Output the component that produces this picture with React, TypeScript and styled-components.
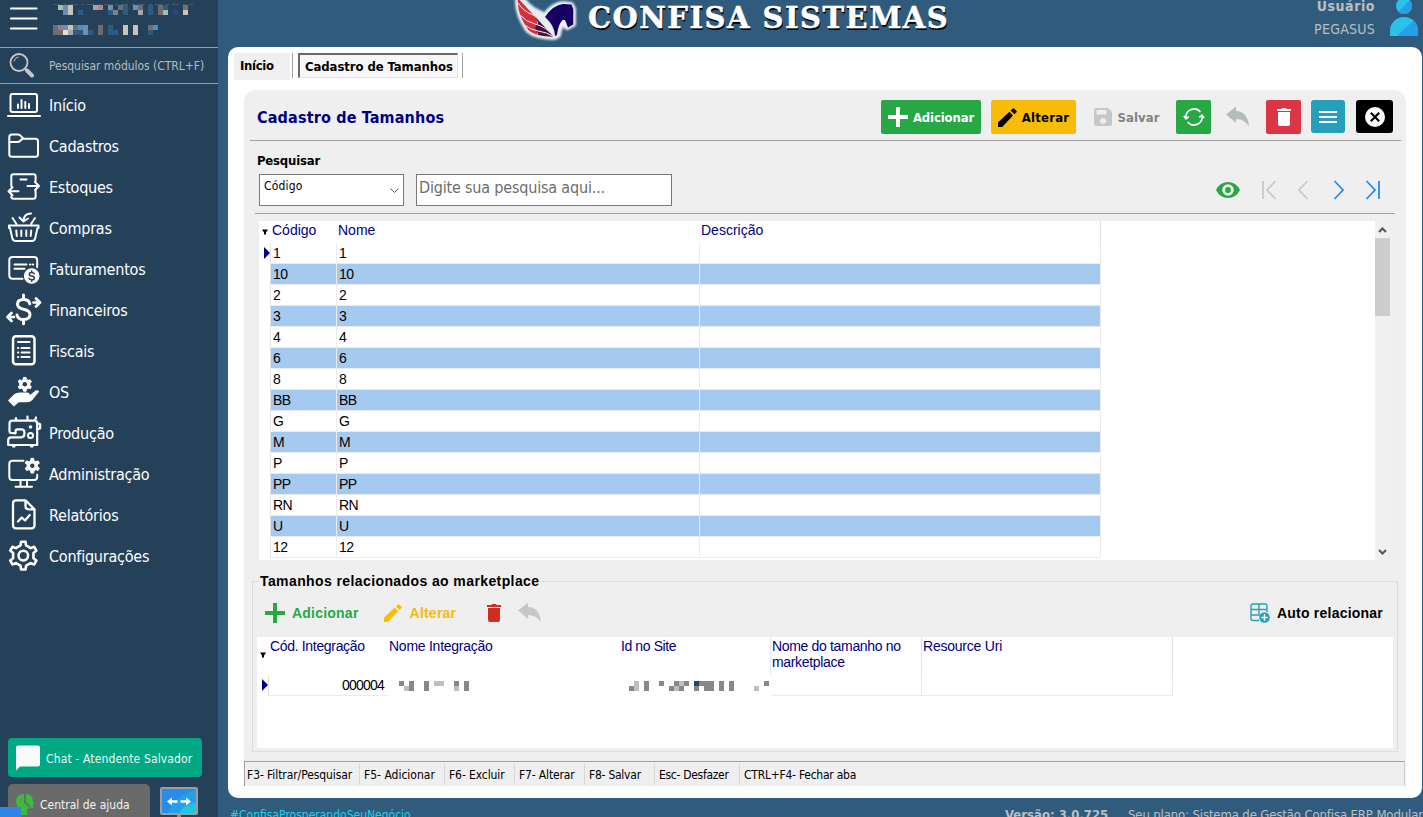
import React from 'react';
import styled, { createGlobalStyle, css } from 'styled-components';

const UI = '"DejaVu Sans Condensed", "Noto Sans", sans-serif';
const GRID = '"Liberation Sans", Arial, sans-serif';

const Global = createGlobalStyle`
  * { box-sizing: border-box; }
  html, body, #root { height: 100%; }
  body { margin: 0; overflow: hidden; background: #305b7d; font-family: ${UI}; color: #000; }
  button, input { font: inherit; }
  svg { display: block; flex: none; }
`;

const Window = styled.div`
  display: grid;
  grid-template-columns: 218px 1fr;
  width: 1423px;
  height: 817px;
  overflow: hidden;
  white-space: nowrap;
`;

/* ---------- sidebar ---------- */

const Sidebar = styled.aside`
  display: flex;
  flex-direction: column;
  background: #25415a;
  height: 817px;
  overflow: hidden;
`;

const SideTop = styled.div`
  display: flex;
  height: 48px;
  flex: none;
  padding-left: 9px;
  border-bottom: 1px solid #9c9c9c;
`;

const SearchBox = styled.div`
  display: flex;
  align-items: center;
  height: 36px;
  flex: none;
  padding-left: 9px;
  gap: 12px;
  border-bottom: 1px solid #9c9c9c;
  color: #b9bcbd;
  font-size: 12px;
  letter-spacing: -0.03px;
`;

const Menu = styled.nav`
  display: flex;
  flex-direction: column;
  flex: 1;
`;

const MenuItem = styled.a`
  display: flex;
  align-items: center;
  gap: 7px;
  height: 41px;
  padding-left: 6px;
  color: #fff;
  font-size: 16px;
  letter-spacing: -0.22px;
`;

const MenuText = styled.span`
  padding-top: 2px;
`;

const ChatButton = styled.button`
  display: flex;
  align-items: center;
  gap: 6px;
  width: 194px;
  height: 39px;
  margin: 0 0 7px 8px;
  padding: 0 0 0 8px;
  flex: none;
  border: 0;
  border-radius: 4px;
  background: #00a884;
  color: #eefaf6;
  font-size: 12px;
  letter-spacing: 0.14px;
`;

const SideBottom = styled.div`
  display: flex;
  position: relative;
  gap: 9px;
  height: 33px;
  flex: none;
  padding-left: 8px;
`;

const HelpButton = styled.div`
  display: flex;
  align-items: center;
  gap: 5px;
  width: 142px;
  height: 40px;
  padding-left: 8px;
  border-radius: 5px 5px 0 0;
  background: #6a6a6a;
  color: #f3f3f3;
  font-size: 12px;
`;

const Loading = styled.div`
  position: absolute;
  left: 0;
  bottom: 0;
  width: 21px;
  height: 10px;
  background: #2d86e8;
`;

/* ---------- main frame ---------- */

const Main = styled.main`
  display: flex;
  flex-direction: column;
  min-width: 0;
`;

const Header = styled.header`
  display: flex;
  height: 47px;
  flex: none;
  overflow: hidden;
`;

const Brand = styled.div`
  display: flex;
  gap: 7px;
  width: 800px;
  padding-left: 291px;
`;

const BrandName = styled.h1`
  margin: -1px 0 0;
  font: bold 29px/38px "DejaVu Serif", serif;
  letter-spacing: 1.5px;
  color: #fff;
  -webkit-text-stroke: 0.5px #fff;
  text-shadow: 1px 2px 0 #000, 0 1px 0 #000;
`;

const User = styled.div`
  display: flex;
  flex: 1;
  justify-content: flex-end;
  gap: 15px;
  padding-right: 5px;
`;

const UserText = styled.div`
  display: flex;
  flex-direction: column;
  align-items: flex-end;
  margin-top: -5px;
  color: #b9c0c4;
  font-size: 14px;
  line-height: 23px;
  letter-spacing: 0.25px;
`;

const UserLabel = styled.strong`
  letter-spacing: 0.55px;
`;

const Card = styled.section`
  display: flex;
  flex-direction: column;
  width: 1194px;
  height: 751px;
  flex: none;
  margin-left: 10px;
  padding: 6px 16px 12px;
  border-radius: 10px;
  background: #fefefe;
`;

const Tabs = styled.div`
  display: flex;
  height: 37px;
  flex: none;
  margin-left: -10px;
  font-size: 13px;
  font-weight: bold;
`;

const Tab = styled.div<{ $active?: boolean }>`
  display: flex;
  align-items: center;
  ${(p) =>
    p.$active
      ? css`
          width: 160px;
          height: 25px;
          margin-left: 5px;
          padding: 1px 0 0 5px;
          border: 1px solid #e3e3e3;
          border-top: 2px solid #696969;
          border-left: 2px solid #696969;
          background: #f7f7f7;
          letter-spacing: -0.08px;
        `
      : css`
          width: 56px;
          height: 27px;
          padding: 0 0 2px 6px;
          letter-spacing: -0.33px;
          background: #f0f0f0;
        `}
`;

const TabLine = styled.i<{ $gap: number }>`
  width: 1px;
  height: 25px;
  margin-left: ${(p) => p.$gap}px;
  background: #a0a0a0;
`;

const Panel = styled.div`
  display: flex;
  flex-direction: column;
  flex: 1;
  border-radius: 12px 12px 0 0;
  background: #efefef;
`;

const PanelHead = styled.div`
  display: flex;
  align-items: flex-start;
  height: 51px;
  flex: none;
  margin: 0 5px 0 6px;
  padding: 10px 8px 0 7px;
  border-bottom: 1px solid #a0a0a0;
`;

const Title = styled.h2`
  flex: 1;
  margin: 0;
  color: #000080;
  font-size: 16px;
  line-height: 35px;
  letter-spacing: 0.16px;
`;

type BtnProps = { $w: number; $bg?: string; $fg?: string; $ml?: number; $h?: number; $r?: number; $ls?: number };

const ToolButton = styled.button<BtnProps>`
  display: flex;
  align-items: center;
  justify-content: center;
  gap: 5px;
  width: ${(p) => p.$w}px;
  height: ${(p) => p.$h ?? 34}px;
  margin: 0 0 0 ${(p) => p.$ml ?? 10}px;
  padding: 0;
  border: 0;
  border-radius: ${(p) => p.$r ?? 2}px;
  background: ${(p) => p.$bg ?? 'transparent'};
  color: ${(p) => p.$fg ?? '#fff'};
  font-size: 13px;
  font-weight: bold;
  letter-spacing: ${(p) => p.$ls ?? -0.15}px;
`;

const SearchArea = styled.div`
  display: flex;
  flex-direction: column;
  height: 73px;
  flex: none;
  margin: 0 11px;
  border-bottom: 1px solid #a0a0a0;
`;

const FieldLabel = styled.label`
  padding: 11px 0 0 2px;
  font-size: 13px;
  line-height: 17px;
  font-weight: bold;
  letter-spacing: -0.2px;
`;

const Fields = styled.div`
  display: flex;
  align-items: center;
  gap: 12px;
  margin-top: 5px;
  padding: 0 14px 0 4px;
`;

const Select = styled.div`
  display: flex;
  justify-content: space-between;
  width: 145px;
  height: 32px;
  padding: 3px 4px 0 4px;
  border: 1px solid #7a7a7a;
  background: #fff;
  font-size: 12px;
  line-height: 17px;
  letter-spacing: 0.2px;
`;

const Query = styled.div`
  width: 256px;
  height: 32px;
  padding-left: 2px;
  border: 1px solid #7a7a7a;
  background: #fff;
  color: #6d6d6d;
  font-size: 16px;
  line-height: 25px;
  letter-spacing: -0.18px;
`;

const Pager = styled.div`
  display: flex;
  align-items: center;
  margin-left: auto;
`;

/* ---------- main grid ---------- */

const GridBox = styled.div`
  display: flex;
  height: 339px;
  flex: none;
  margin: 7px 16px 0 15px;
  background: #fff;
`;

const GridArea = styled.div`
  flex: 1;
  font: 14px/20px ${GRID};
`;

const SizeRow = styled.div<{ $blue?: boolean; $head?: boolean }>`
  display: grid;
  grid-template-columns: 12px 66px 363px 401px;
  width: 842px;
  height: ${(p) => (p.$head ? 22 : 21)}px;
  color: ${(p) => (p.$head ? '#000080' : '#000')};
  --cell: ${(p) => (p.$blue ? '#a6c9ef' : '#fff')};
`;

const Cell = styled.div`
  padding: 0 0 0 2px;
  border-right: 1px solid #ebebeb;
  border-bottom: 1px solid #ebebeb;
  background: var(--cell);
  letter-spacing: -0.5px;
`;

const HeadCell = styled.div<{ $line?: boolean }>`
  padding-left: 1px;
  border-right: ${(p) => (p.$line ? '1px solid #e3e3e3' : 0)};
  line-height: 19px;
`;

const Marker = styled.div<{ $line?: boolean; $inset?: number; $drop?: number }>`
  display: flex;
  align-items: center;
  justify-content: flex-end;
  padding-right: ${(p) => p.$inset ?? 0}px;
  padding-bottom: ${(p) => p.$drop ?? 0}px;
  border-right: ${(p) => (p.$line ? '1px solid #e3e3e3' : 0)};
`;

const Scroll = styled.div`
  display: flex;
  flex-direction: column;
  align-items: center;
  width: 15px;
  background: #f0f0f0;
`;

const ArrowBox = styled.div`
  display: grid;
  place-items: center;
  height: 17px;
`;

const Thumb = styled.div`
  width: 15px;
  height: 78px;
  margin-bottom: auto;
  background: #cdcdcd;
`;

/* ---------- marketplace group ---------- */

const Group = styled.fieldset`
  min-width: 0;
  width: 1146px;
  height: 179px;
  flex: none;
  margin: 13px 0 0 8px;
  padding: 0 4px 3px 4px;
  border: 1px solid #dcdcdc;
  font-family: ${GRID};
`;

const Legend = styled.legend`
  margin-left: 2px;
  padding: 0 1px;
  font: bold 14px/16px ${GRID};
  letter-spacing: 0.4px;
`;

const GroupTools = styled.div`
  display: flex;
  align-items: center;
  height: 48px;
  padding: 0 10px 0 8px;
  font: bold 14px/20px ${GRID};
`;

const LinkButton = styled.div<{ $c: string; $ml?: number; $gap?: number }>`
  display: flex;
  align-items: center;
  gap: ${(p) => p.$gap ?? 7}px;
  margin-left: ${(p) => p.$ml ?? 0}px;
  color: ${(p) => p.$c};
  letter-spacing: 0.22px;
`;

const Spacer = styled.div`
  flex: 1;
`;

const LinkGrid = styled.div`
  height: 111px;
  background: #fff;
  font-size: 14px;
`;

const LinkRow = styled.div<{ $head?: boolean }>`
  display: grid;
  grid-template-columns: 12px 119px 232px 151px 151px 251px;
  width: 916px;
  height: ${(p) => (p.$head ? 38 : 21)}px;
`;

const LinkHead = styled.div<{ $line?: string; $ls?: number }>`
  padding: 1px 0 0 1px;
  border-right: ${(p) => (p.$line ? `1px solid ${p.$line}` : 0)};
  color: #000080;
  line-height: 16px;
  letter-spacing: ${(p) => p.$ls ?? -0.33}px;
  white-space: pre;
`;

const LinkCell = styled.div<{ $line?: boolean; $end?: boolean }>`
  display: flex;
  align-items: center;
  justify-content: ${(p) => (p.$end ? 'flex-end' : 'flex-start')};
  padding-right: ${(p) => (p.$end ? 4 : 0)}px;
  border-right: ${(p) => (p.$line ? '1px solid #ebebeb' : 0)};
  border-bottom: ${(p) => (p.$line || p.$end ? '1px solid #ebebeb' : 0)};
  letter-spacing: -0.8px;
`;

/* ---------- status + footer ---------- */

const Status = styled.div`
  display: flex;
  height: 25px;
  margin-top: auto;
  margin-right: 1px;
  padding-top: 2px;
  border: 1px solid #d0d0d0;
  border-top: 1px solid #a0a0a0;
  border-left: 1px solid #a0a0a0;
  border-bottom: 0;
  font-size: 12px;
`;

const StatusItem = styled.span<{ $w: number; $ls: number }>`
  width: ${(p) => p.$w}px;
  height: 21px;
  padding-left: 4px;
  border-right: 1px solid #d7d7d7;
  line-height: 23px;
  letter-spacing: ${(p) => p.$ls}px;
  &:first-child { padding-left: 2px; }
  &:last-child { border-right: 0; }
`;

const Footer = styled.footer`
  display: flex;
  padding: 8px 0 0 12px;
  height: 19px;
  overflow: hidden;
  color: #b9c0c4;
  font-size: 13px;
  line-height: 17px;
`;

const Hashtag = styled.span`
  width: 775px;
  font-size: 12px;
  line-height: 18px;
  color: #19d3e6;
`;

const Version = styled.strong`
  width: 123px;
`;

const Plan = styled.span`
  letter-spacing: -0.12px;
`;

/* ---------- drawings ---------- */

function gear(cx: number, cy: number, outer: number, inner: number, teeth: number, top = 0.17, base = 0.3) {
  const step = (Math.PI * 2) / teeth;
  const pts: string[] = [];
  for (let i = 0; i < teeth; i++) {
    const a = i * step - Math.PI / 2;
    ([[-base, inner], [-top, outer], [top, outer], [base, inner]] as const).forEach(([o, r]) => {
      pts.push(`${(cx + r * Math.cos(a + o * step)).toFixed(2)} ${(cy + r * Math.sin(a + o * step)).toFixed(2)}`);
    });
  }
  return `M${pts.join('L')}Z`;
}

const MenuIcon = ({ children }: { children: React.ReactNode }) => (
  <svg width="36" height="35" viewBox="0 0 36 35" fill="none" stroke="#fff" strokeWidth="2" strokeLinejoin="round" strokeLinecap="round">
    {children}
  </svg>
);

const menu: [string, React.ReactNode][] = [
  ['Início', <><rect x="4.5" y="7" width="26.5" height="18" rx="2" /><path d="M2 29h32M12 17.5v3.5M15.5 13v8M19.3 15v6M23 17v4" /></>],
  ['Cadastros', <><path d="M3.3 9q0-2.6 2.6-2.6h6q1.400 0 2.300 1l3.300 3.400h12q2.500 0 2.500 2.500v13q0 2.500-2.500 2.500h-23.600q-2.600 0-2.600-2.600z" /><path d="M3.500 14h8q1.500 0 2.500-1l2.500-2.200" /></>],
  ['Estoques', <><path d="M5.300 17v-9.500q0-2.300 2.300-2.300h20q2 0 2 2v4.800M29.600 22v5.500q0 2.200-2.200 2.200h-19.800q-2.300 0-2.300-2.300v-.4M14.500 10.500h6M12.500 22.200h-10M6.500 18.200l-4 4 4 4M21.500 17h11.500M29 13l4 4-4 4" /></>],
  ['Compras', <><path d="M3 15.500h29.500v2.500h-1l-2.400 10.600q-.6 2.400-3 2.400h-16.700q-2.400 0-3-2.400l-2.400-10.600h-1z" /><path d="M10.300 20.500l.5 5.500M15.300 20.500v5.500M20.300 20.500v5.500M25.200 20.500l-.5 5.500M6.500 8l4 6M29 8l-4 6M25 3.500q-7 0-7.500 7M13.500 7.500l4 4 4.500-3" /></>],
  ['Faturamentos', <><path d="M16.500 27.800h-10q-3.200 0-3.200-3.200v-15.300q0-3.200 3.200-3.200h21.500q3.200 0 3.200 3.200v7M8.500 13.500h12M8.500 17.800h10M24 13.500h.4M26.800 13.500h.4" /><circle cx="25.700" cy="25" r="7.200" fill="#fff" stroke="#fff" strokeWidth="1.200" /><path d="M28.300 22.700q-.8-1.200-2.600-1.200-2.400 0-2.400 1.700 0 1.400 2.400 1.800 2.700.4 2.700 1.900 0 1.800-2.700 1.800-2 0-2.700-1.300M25.700 20v1.500M25.700 28.700v1.500" stroke="#25415a" strokeWidth="1.500" /></>],
  ['Financeiros', <><path d="M23.800 11.800q-1-4.300-6.300-4.300-6 0-6 4.700 0 3.600 6 5 6.500 1.300 6.500 5.400 0 5-6.500 5-5.500 0-6.500-4.600M17.500 3v4.500M17.500 27.600v4.200" strokeWidth="3" /><path d="M27.500 10.500h6M30 6.500l4 4-4 4M8 25h-6M5.500 21l-4 4 4 4" strokeWidth="2.700" /></>],
  ['Fiscais', <><rect x="7" y="3.300" width="21.500" height="28" rx="3" strokeWidth="2.500" /><path d="M12 9h11.500M12 15h.3M12 19.500h.3M12 24h.3M15.500 15h8M15.500 19.500h8M15.500 24h8" /></>],
  ['OS', <><path d={gear(18.800, 10.300, 7, 5.200, 6)} fill="#fff" strokeWidth="1" /><circle cx="18.800" cy="10.300" r="2.300" fill="#25415a" stroke="none" /><path d="M3 26.500l6-5.800q2-1.500 4.500-1.500h7.500q2 0 2 1.800t-2 1.900h-4.500q5 .8 8-1.400l5-4q1.400-1 2.700 0l-6.500 8q-1.700 1.900-4.500 1.900h-8.700l-4.500 4z" fill="#fff" strokeWidth="1.600" /></>],
  ['Produção', <><path d="M5.500 18q-2 0-2-2v-7.300q0-3 3-3h21.700q3 0 3 3v21.300h-29v-4.700q0-3 3-3h10q3.200 0 3.200-3.200v-1.600q0-3.200-3.200-3.200h-4q-1.600 0-1.600 1.600v2.400zM31 8.500h1.800q1.400 0 1.400 1.400v2.600q0 1.400-1.400 1.400h-1.800M10 3v2.500M21.500 1.500v4M30 2.500l-1 3M7 31.500h1.500M25 31.500h1.500" strokeWidth="2.200" /><circle cx="24.500" cy="20.500" r="2.500" /><circle cx="24.500" cy="12" r=".8" /></>],
  ['Administração', <><path d="M17.500 4.800h-11q-3.200 0-3.200 3.200v12.700q0 3.200 3.200 3.200h21.500q3.200 0 3.200-3.200v-2M14.500 24.500v6M21 24.500v6M9.500 30.700h16.500" /><path d={gear(26.300, 9.700, 7.500, 5.300, 6)} fill="#fff" strokeWidth="1" /><circle cx="26.300" cy="9.700" r="2.200" fill="#25415a" stroke="none" /></>],
  ['Relatórios', <><path d="M19.500 3.300h-9.500q-3 0-3 3v22q0 3 3 3h15.500q3 0 3-3v-16zM19.500 3.500v5.800q0 3 3 3h5.500M12 24.500l3.700-4 3.300 3 4.700-5.500" strokeWidth="2.300" /></>],
  ['Configurações', <><path d={gear(17.300, 17.600, 14, 10.500, 6, 0.15, 0.26)} strokeWidth="2.600" /><circle cx="17.300" cy="17.600" r="4.800" strokeWidth="2.500" /></>],
];

type Px = [number, number, string];

const Mosaic = ({ w, h, px, line }: { w: number; h: number; px: Px[]; line?: string }) => (
  <svg width={w} height={h} viewBox={`0 0 ${w} ${h}`} shapeRendering="crispEdges">
    {line && <path d="M0 4.500h140" stroke={line} strokeDasharray="7 4 3 3" />}
    {px.map(([x, y, c], i) => (
      <rect key={i} x={x} y={y} width="5" height="5" fill={c} />
    ))}
  </svg>
);

const A = '#9ac0b8', B = '#6f8fb0', C = '#c8c4b8', E = '#305b80', F = '#6e6c6e', G = '#a5a5a6', H = '#4f8fb8';
const companyPx: Px[] = [
  [5, 5, A], [10, 5, B], [15, 5, C], [40, 5, G], [45, 5, '#b98585'], [55, 5, B], [65, 5, F], [70, 5, E], [80, 5, B], [85, 5, F], [95, 5, E], [105, 5, F], [110, 5, E], [130, 5, '#7a7070'],
  [10, 10, B], [15, 10, C], [25, 10, E], [55, 10, E], [60, 10, '#7a8684'], [70, 10, E], [85, 10, G], [95, 10, E], [105, 10, F], [110, 10, A], [120, 10, '#26478a'], [130, 10, C],
  [0, 25, F], [5, 25, '#88868a'], [10, 25, B], [15, 25, C], [20, 25, F], [25, 25, H], [30, 25, B], [45, 25, F], [55, 25, E], [70, 25, C], [80, 25, C], [95, 25, '#756a6c'], [100, 25, H],
  [0, 30, F], [5, 30, '#7a6a6c'], [10, 30, '#e0e0e0'], [15, 30, G], [20, 30, E], [25, 30, E], [30, 30, B], [35, 30, E], [45, 30, F], [55, 30, E], [60, 30, E], [70, 30, C], [80, 30, C], [95, 30, E],
];
const K = '#858a88', M = '#bfbfb7';
const namePx: Px[] = [[0, 0, K], [5, 5, M], [10, 0, K], [10, 5, K], [25, 0, K], [25, 5, K], [35, 0, M], [40, 0, M], [55, 0, K], [55, 5, M], [65, 0, K], [65, 5, K]];
const sitePx: Px[] = [[0, 5, K], [5, 0, M], [5, 5, M], [15, 0, K], [15, 5, K], [30, 0, K], [40, 5, K], [45, 0, K], [50, 0, M], [45, 5, M], [50, 5, K], [55, 0, K], [65, 0, '#2a4562'], [65, 5, K], [70, 0, K], [75, 0, K], [75, 5, K], [80, 0, K], [80, 5, K], [90, 0, K], [90, 5, K], [100, 0, K], [100, 5, K], [125, 5, M], [135, 0, K]];

const Pencil = ({ s, c }: { s: number; c: string }) => (
  <svg width={s} height={s} viewBox="0 0 18 18" fill={c}><path d="M0 18v-4.200l10.800-10.300 3.400 3.600L4 18zM12 2.400l1.700-1.700q.9-.9 1.800 0l1.800 1.800q.9.900 0 1.700l-1.800 1.800z" /></svg>
);
const Plus = ({ c }: { c: string }) => (
  <svg width="20" height="20" viewBox="0 0 20 20"><path d="M8 0h4v8H20v4h-8V20H8v-8H0V8h8z" fill={c} /></svg>
);
const Trash = ({ c }: { c: string }) => (
  <svg width="14" height="18" viewBox="0 0 14 18" fill={c}><path d="M0 1h4.300L5.300 0h3.400l1 1H14v2H0zM1 4h12v12q0 2-2 2H3q-2 0-2-2z" /></svg>
);
const Undo = ({ c }: { c: string }) => (
  <svg width="24" height="22" viewBox="0 0 24 22" fill={c}><path d="M0 8.500L10 .5v4.500q12 .5 13 16-4-8-13-8v4z" /></svg>
);
const Chev = ({ d, c, w }: { d: string; c: string; w: number }) => (
  <svg width={w} height="20" viewBox={`0 0 ${w} 20`} fill="none" stroke={c} strokeWidth="1.800"><path d={d} /></svg>
);
const NavSlot = styled.span<{ $ml: number }>`
  margin-left: ${(p) => p.$ml}px;
`;
const HeadArrow = () => (
  <svg width="6" height="6" viewBox="0 0 6 6"><path d="M0 .5h6L4 3.500V5.500H2V3.500z" fill="#000" /></svg>
);
const RowArrow = () => (
  <svg width="6" height="12" viewBox="0 0 6 12"><path d="M0 0l6 6L0 12z" fill="#000080" /></svg>
);

const sizes = ['1', '10', '2', '3', '4', '6', '8', 'BB', 'G', 'M', 'P', 'PP', 'RN', 'U', '12'];

const shortcuts: [string, number, number][] = [
  ['F3- Filtrar/Pesquisar', 115, -0.08],
  ['F5- Adicionar', 85, 0],
  ['F6- Excluir', 70, -0.1],
  ['F7- Alterar', 70, -0.15],
  ['F8- Salvar', 70, -0.25],
  ['Esc- Desfazer', 85, -0.3],
  ['CTRL+F4- Fechar aba', 160, -0.24],
];

export default function App() {
  return (
    <Window>
      <Global />
      <Sidebar>
        <SideTop>
          <svg width="44" height="40" viewBox="0 0 44 40" stroke="#fff" strokeWidth="2.200" strokeLinecap="round"><path d="M2 8.500h25.500M2 18.500h25.500M2 28.500h25.500" /></svg>
          <Mosaic w={145} h={40} px={companyPx} line="#44596e" />
        </SideTop>
        <SearchBox>
          <svg width="28" height="28" viewBox="0 0 28 28" fill="none" stroke="#c4c6c8"><circle cx="10" cy="10.500" r="8.500" strokeWidth="1.800" /><path d="M5 9.500q1-4 4.500-4.500" strokeWidth="1" /><path d="M16.500 17l3 3" strokeWidth="2" /><path d="M18 18.500l5 5" strokeWidth="4" strokeLinecap="round" /></svg>
          Pesquisar módulos (CTRL+F)
        </SearchBox>
        <Menu>
          {menu.map(([name, art]) => (
            <MenuItem key={name}>
              <MenuIcon>{art}</MenuIcon>
              <MenuText>{name}</MenuText>
            </MenuItem>
          ))}
        </Menu>
        <ChatButton>
          <svg width="24" height="26" viewBox="0 0 24 26"><path d="M2 .5h20q2 0 2 2v17q0 2-2 2H4L0 25.500v-23q0-2 2-2z" fill="#f7fbfa" /></svg>
          <MenuText>Chat - Atendente Salvador</MenuText>
        </ChatButton>
        <SideBottom>
          <HelpButton>
            <svg width="19" height="22" viewBox="0 0 19 22" fill="#3dbb3d"><path d="M8 1v9l6 5 1-1-5-5V1q7 1 7 7l1.500 3H17v4h-3l-3 1v6H5v-6Q0 13 0 8q0-6 8-7z" /></svg>
            <MenuText>Central de ajuda</MenuText>
          </HelpButton>
          <svg width="40" height="33" viewBox="0 0 40 33">
            <path d="M2 4h36v26H2z" fill="#2a8ce8" />
            <path d="M38 5v25H9Q14 12 38 5z" fill="#259fe8" /><path d="M38 18v12H20q3-9 18-12z" fill="#1fc6e4" />
            <rect x="2" y="4" width="36" height="26" rx="1" fill="none" stroke="#9d9d9d" strokeWidth="2" />
            <path d="M8 17.500l5-4v2.800h5.500v2.400h-5.500v2.800zM32 17.500l-5-4v2.800h-5.500v2.400h5.500v2.800z" fill="#fff" />
            <path d="M18 31h4v2h-4z" fill="#8f8f8f" />
          </svg>
          <Loading />
        </SideBottom>
      </Sidebar>

      <Main>
        <Header>
          <Brand>
            <svg width="72" height="46" viewBox="0 0 72 46">
              <defs>
                <filter id="glow" x="-20%" y="-20%" width="140%" height="140%"><feGaussianBlur stdDeviation=".8" /></filter>
                <clipPath id="wing"><path d="M8.800-2C8 12 14 22 19.300 30 25 35 32 36 45 37 46.500 26 38 19L24 10Q16 4 12-2z" /></clipPath>
              </defs>
              <path d="M9-2C8 12 14 22 19.300 30 25 35 32 36 45 37L49 35Q50 27 54 22L58 27 64 24V9L62 5 54 4Q44 5 36 16L24 10Q16 4 12-2z" fill="#e9eef1" stroke="#e9eef1" strokeWidth="6" strokeLinejoin="round" filter="url(#glow)" />
              <g clipPath="url(#wing)">
                <path d="M0-4h28v44H0z" fill="#d3303a" />
                <path d="M29 8l17 8v24H24l5-6-3-6 3-5-2-6z" fill="#4a0f3e" />
                <path d="M9 3q5 8 15 12 14 6 21 22M10 14q7 8 16 10 12 3 19 13M14 24q8 6 15 7 9 1 16 6" fill="none" stroke="#f4f4f4" strokeWidth="1" />
              </g>
              <path d="M36 17Q44 5 54 4l8.500.500L64.300 9v15.500L59 27.500 56 20h-2.500Q49 25 48 35l-2 1Q46 26 36 17z" fill="#150063" />
            </svg>
            <BrandName>CONFISA SISTEMAS</BrandName>
          </Brand>
          <User>
            <UserText>
              <UserLabel>Usuário</UserLabel>
              <span>PEGASUS</span>
            </UserText>
            <svg width="28" height="36" viewBox="0 0 28 36">
              <circle cx="14" cy="6" r="8" fill="#2cc1e8" /><path d="M19.700.3A8 8 0 0 1 8.300 11.700z" fill="#259fe8" />
              <path d="M0 36v-5a14 14 0 0 1 28 0v5z" fill="#2cc1e8" /><path d="M7 36L23.500 20.500Q28 24 28 31v5z" fill="#259fe8" />
            </svg>
          </User>
        </Header>

        <Card>
          <Tabs>
            <Tab>Início</Tab>
            <TabLine $gap={2} />
            <Tab $active>Cadastro de Tamanhos</Tab>
            <TabLine $gap={4} />
          </Tabs>

          <Panel>
            <PanelHead>
              <Title>Cadastro de Tamanhos</Title>
              <ToolButton $w={100} $bg="#28a745"><Plus c="#fff" />Adicionar</ToolButton>
              <ToolButton $w={85} $bg="#f9bc06" $fg="#000" $ls={0.2}><Pencil s={19} c="#000" />Alterar</ToolButton>
              <ToolButton $w={66} $fg="#838383" $ml={18} $ls={0.1}>
                <svg width="18" height="18" viewBox="0 0 18 18"><path d="M2 0h12l4 4v12q0 2-2 2H2q-2 0-2-2V2q0-2 2-2zM2.500 2v4.500h10V2zM9 10a3 3 0 1 0 .01 0z" fillRule="evenodd" fill="#c6c8c8" /></svg>
                Salvar
              </ToolButton>
              <ToolButton $w={35} $bg="#28a745" $ml={16}>
                <svg width="22" height="20" viewBox="0 0 24 22" fill="none" stroke="#fff" strokeWidth="1.700"><path d="M3 12.500V11a9 9 0 0 1 16-5.500M21 9.500V11a9 9 0 0 1-16 5.500M.8 10l2.400 3 3-2.500M23.200 12l-2.400-3-3 2.500" /></svg>
              </ToolButton>
              <ToolButton $w={24} $ml={15}><Undo c="#b3bcba" /></ToolButton>
              <ToolButton $w={35} $bg="#dc3545" $ml={16}><Trash c="#fff" /></ToolButton>
              <ToolButton $w={34} $h={33} $bg="#269fbb" $r={3}>
                <svg width="18" height="14" viewBox="0 0 18 14" stroke="#fff" strokeWidth="2"><path d="M0 2h18M0 7h18M0 12h18" /></svg>
              </ToolButton>
              <ToolButton $w={37} $h={33} $bg="#000" $ml={11} $r={3}>
                <svg width="20" height="20" viewBox="0 0 20 20"><circle cx="10" cy="10" r="10" fill="#fff" /><path d="M5.800 5.800l8.400 8.400M14.200 5.800l-8.400 8.400" stroke="#000" strokeWidth="2.200" /></svg>
              </ToolButton>
            </PanelHead>

            <SearchArea>
              <FieldLabel>Pesquisar</FieldLabel>
              <Fields>
                <Select>
                  Código
                  <svg width="9" height="24" viewBox="0 0 9 24" fill="none" stroke="#555"><path d="M.5 10.500l4 4 4-4" /></svg>
                </Select>
                <Query>Digite sua pesquisa aqui...</Query>
                <Pager>
                  <svg width="24" height="16" viewBox="0 0 24 16"><path d="M0 8Q4 0 12 0t12 8q-4 8-12 8T0 8z" fill="#28a745" /><circle cx="12" cy="8" r="5.800" fill="#efefef" /><circle cx="12" cy="8" r="2.900" fill="#28a745" /></svg>
                  <NavSlot $ml={21}><Chev w={16} c="#c9c9c9" d="M2 1v18M14.500 1L6 10l8.500 9" /></NavSlot>
                  <NavSlot $ml={20}><Chev w={12} c="#c9c9c9" d="M10.500 1L2 10l8.500 9" /></NavSlot>
                  <NavSlot $ml={24}><Chev w={12} c="#1f8fee" d="M1.500 1l8.500 9-8.500 9" /></NavSlot>
                  <NavSlot $ml={20}><Chev w={16} c="#1f8fee" d="M1.500 1l8.500 9-8.500 9M14 1v18" /></NavSlot>
                </Pager>
              </Fields>
            </SearchArea>

            <GridBox>
              <GridArea>
                <SizeRow $head>
                  <Marker $inset={3}><HeadArrow /></Marker>
                  <HeadCell>Código</HeadCell>
                  <HeadCell>Nome</HeadCell>
                  <HeadCell $line>Descrição</HeadCell>
                </SizeRow>
                {sizes.map((s, i) => (
                  <SizeRow key={s} $blue={i % 2 === 1}>
                    <Marker $line $drop={2}>{i === 0 && <RowArrow />}</Marker>
                    <Cell>{s}</Cell>
                    <Cell>{s}</Cell>
                    <Cell />
                  </SizeRow>
                ))}
              </GridArea>
              <Scroll>
                <ArrowBox><svg width="9" height="6" viewBox="0 0 9 6" fill="none" stroke="#555" strokeWidth="2"><path d="M1 5l3.500-3.500L8 5" /></svg></ArrowBox>
                <Thumb />
                <ArrowBox><svg width="9" height="6" viewBox="0 0 9 6" fill="none" stroke="#555" strokeWidth="2"><path d="M1 1l3.500 3.500L8 1" /></svg></ArrowBox>
              </Scroll>
            </GridBox>

            <Group>
              <Legend>Tamanhos relacionados ao marketplace</Legend>
              <GroupTools>
                <LinkButton $c="#28a745"><Plus c="#28a745" />Adicionar</LinkButton>
                <LinkButton $c="#f9bc06" $ml={25} $gap={8}><Pencil s={18} c="#f9bc06" />Alterar</LinkButton>
                <LinkButton $c="#d12e22" $ml={31}><Trash c="#d12e22" /></LinkButton>
                <LinkButton $c="#c6c8c8" $ml={17}><Undo c="#c6c8c8" /></LinkButton>
                <Spacer />
                <LinkButton $c="#000" $gap={7}>
                  <svg width="20" height="20" viewBox="0 0 20 20" fill="none" stroke="#2a9fbc" strokeWidth="1.400"><path d="M9 17.500H3q-2 0-2-2V3q0-2 2-2h12q2 0 2 2v6M1 6.500h16M1 12h9M9 1v10" /><circle cx="14.500" cy="14.500" r="5.300" fill="#2a9fbc" stroke="none" /><path d="M14.500 11.300v6.400M11.300 14.500h6.400" stroke="#fff" /></svg>
                  Auto relacionar
                </LinkButton>
              </GroupTools>
              <LinkGrid>
                <LinkRow $head>
                  <Marker $inset={3} $drop={2}><HeadArrow /></Marker>
                  <LinkHead>Cód. Integração</LinkHead>
                  <LinkHead $ls={-0.25}>Nome Integração</LinkHead>
                  <LinkHead $line="#dfeaf2" $ls={-0.4}>Id no Site</LinkHead>
                  <LinkHead $line="#e3e3e3">{'Nome do tamanho no\nmarketplace'}</LinkHead>
                  <LinkHead $line="#e3e3e3" $ls={-0.22}>Resource Uri</LinkHead>
                </LinkRow>
                <LinkRow>
                  <Marker $line $drop={2}><RowArrow /></Marker>
                  <LinkCell $end>000004</LinkCell>
                  <LinkCell><NavSlot $ml={11}><Mosaic w={70} h={10} px={namePx} /></NavSlot></LinkCell>
                  <LinkCell><NavSlot $ml={9}><Mosaic w={140} h={10} px={sitePx} /></NavSlot></LinkCell>
                  <LinkCell $line />
                  <LinkCell $line />
                </LinkRow>
              </LinkGrid>
            </Group>

            <Status>
              {shortcuts.map(([t, w, ls]) => (
                <StatusItem key={t} $w={w} $ls={ls}>{t}</StatusItem>
              ))}
            </Status>
          </Panel>
        </Card>

        <Footer>
          <Hashtag>#ConfisaProsperandoSeuNegócio</Hashtag>
          <Version>Versão: 3.0.725</Version>
          <Plan>Seu plano: Sistema de Gestão Confisa ERP Modular</Plan>
        </Footer>
      </Main>
    </Window>
  );
}
